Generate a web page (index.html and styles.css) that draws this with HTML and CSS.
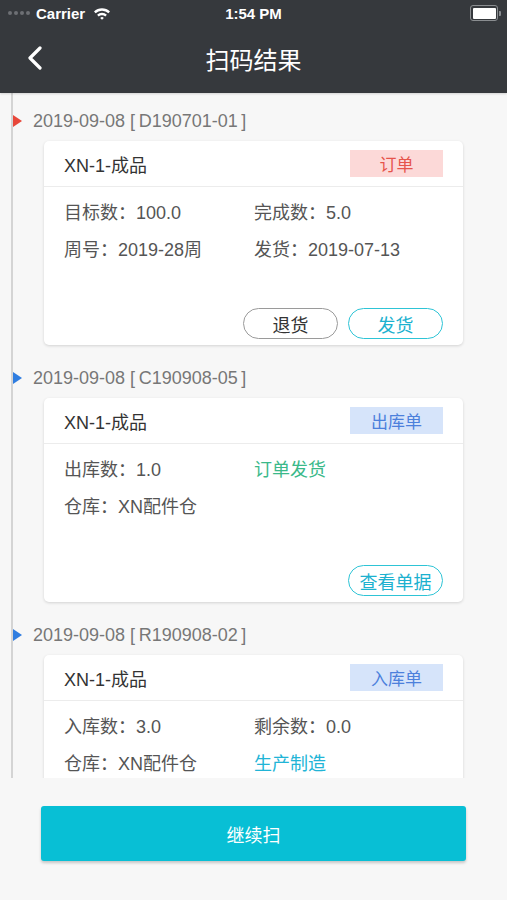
FILE: index.html
```html
<!DOCTYPE html>
<html lang="zh-CN">
<head>
    <meta charset="UTF-8">
    <meta name="viewport" content="width=device-width, initial-scale=1.0">
    <title>扫码结果</title>
    <link rel="stylesheet" href="styles.css">
</head>
<body>
    <div class="header">
        <div class="status-bar">
            <div class="status-left">
                <span class="signal"><i></i><i></i><i></i><i></i></span>
                <span>Carrier</span>
                <svg class="wifi" width="18" height="13" viewBox="0 0 18 13">
                    <path d="M1 4.6a11.5 11.5 0 0 1 16 0l-1.6 1.7a9.2 9.2 0 0 0-12.8 0z" fill="#fff"/>
                    <path d="M4.1 7.8a7 7 0 0 1 9.8 0l-1.6 1.7a4.7 4.7 0 0 0-6.6 0z" fill="#fff"/>
                    <path d="M7.2 11a2.5 2.5 0 0 1 3.6 0L9 12.8z" fill="#fff"/>
                </svg>
            </div>
            <div class="status-time">1:54 PM</div>
            <div class="status-right">
                <span class="battery"><span class="battery-level"></span></span>
                <span class="battery-tip"></span>
            </div>
        </div>
        <div class="nav-bar">
            <svg class="back" width="16" height="24" viewBox="0 0 16 24">
                <path d="M13 2L3 12l10 10" fill="none" stroke="#fff" stroke-width="3.2" stroke-linecap="round" stroke-linejoin="round"/>
            </svg>
            <h1>扫码结果</h1>
        </div>
    </div>

    <div class="timeline">
        <div class="entry">
            <div class="date"><span class="mark red"></span>2019-09-08 [&thinsp;D190701-01&thinsp;]</div>
            <div class="card">
                <div class="card-head">
                    <span class="card-title">XN-1-成品</span>
                    <span class="badge order">订单</span>
                </div>
                <div class="card-body">
                    <div class="row"><span>目标数：100.0</span><span>完成数：5.0</span></div>
                    <div class="row"><span>周号：2019-28周</span><span>发货：2019-07-13</span></div>
                </div>
                <div class="actions">
                    <button class="pill gray">退货</button>
                    <button class="pill cyan">发货</button>
                </div>
            </div>
        </div>

        <div class="entry">
            <div class="date"><span class="mark blue"></span>2019-09-08 [&thinsp;C190908-05&thinsp;]</div>
            <div class="card">
                <div class="card-head">
                    <span class="card-title">XN-1-成品</span>
                    <span class="badge stock">出库单</span>
                </div>
                <div class="card-body">
                    <div class="row"><span>出库数：1.0</span><span class="green">订单发货</span></div>
                    <div class="row"><span>仓库：XN配件仓</span></div>
                </div>
                <div class="actions">
                    <button class="pill cyan">查看单据</button>
                </div>
            </div>
        </div>

        <div class="entry">
            <div class="date"><span class="mark blue"></span>2019-09-08 [&thinsp;R190908-02&thinsp;]</div>
            <div class="card">
                <div class="card-head">
                    <span class="card-title">XN-1-成品</span>
                    <span class="badge stock">入库单</span>
                </div>
                <div class="card-body">
                    <div class="row"><span>入库数：3.0</span><span>剩余数：0.0</span></div>
                    <div class="row"><span>仓库：XN配件仓</span><span class="cyan-text">生产制造</span></div>
                </div>
            </div>
        </div>
    </div>

    <div class="footer">
        <div class="scan-button">继续扫</div>
    </div>
</body>
</html>
```

FILE: styles.css
```css
body {
    margin: 0;
    width: 507px;
    height: 900px;
    overflow: hidden;
    background: #f7f7f7;
    font-family: "Liberation Sans", "Noto Sans CJK SC", sans-serif;
    color: #555;
}
.header {
    height: 93px;
    background: #36393d;
    color: #fff;
    box-shadow: 0 1px 2px rgba(0,0,0,0.15);
    position: relative;
    z-index: 1;
}
.status-bar {
    height: 26px;
    display: flex;
    align-items: center;
    justify-content: space-between;
    padding: 0 6px 0 8px;
    font-size: 15px;
    font-weight: bold;
    position: relative;
}
.status-left {
    display: flex;
    align-items: center;
    gap: 5px;
}
.signal {
    display: flex;
    gap: 2px;
    margin-right: 1px;
}
.signal i {
    width: 4px;
    height: 4px;
    border-radius: 50%;
    background: #6d7074;
}
.wifi {
    margin-left: 3px;
}
.status-time {
    position: absolute;
    left: 0;
    right: 0;
    text-align: center;
    pointer-events: none;
}
.status-right {
    display: flex;
    align-items: center;
}
.battery {
    width: 23px;
    height: 11px;
    border: 1.5px solid #8a8d90;
    border-radius: 3px;
    padding: 1.5px;
    box-sizing: content-box;
    display: flex;
}
.battery-level {
    flex: 1;
    background: #fff;
    border-radius: 1px;
}
.battery-tip {
    width: 2px;
    height: 5px;
    background: #8a8d90;
    border-radius: 0 1px 1px 0;
    margin-left: 1px;
}
.nav-bar {
    height: 67px;
    display: flex;
    align-items: center;
    justify-content: center;
    position: relative;
}
.back {
    position: absolute;
    left: 27px;
    top: 20px;
}
.nav-bar h1 {
    margin: 0 0 2px;
    font-size: 24px;
    font-weight: normal;
}
.timeline {
    margin-left: 11px;
    border-left: 2px solid #d4d4d4;
    height: 685px;
    overflow: hidden;
    padding-top: 18px;
    box-sizing: border-box;
}
.entry {
    margin-bottom: 23px;
}
.date {
    display: flex;
    align-items: center;
    height: 20px;
    font-size: 18px;
    color: #777;
}
.mark {
    width: 0;
    height: 0;
    border-top: 6px solid transparent;
    border-bottom: 6px solid transparent;
    border-left: 9px solid #e8473a;
    margin-right: 11px;
}
.mark.blue {
    border-left-color: #2f7de0;
}
.card {
    margin: 10px 0 0 31px;
    width: 419px;
    height: 204px;
    background: #fff;
    border-radius: 5px;
    box-shadow: 0 1px 3px rgba(0,0,0,0.15);
    display: flex;
    flex-direction: column;
}
.card-head {
    height: 45px;
    border-bottom: 1px solid #ececec;
    display: flex;
    align-items: center;
    justify-content: space-between;
    padding: 0 20px;
}
.card-title {
    font-size: 18px;
    color: #333;
}
.badge {
    width: 93px;
    height: 27px;
    display: flex;
    align-items: center;
    justify-content: center;
    font-size: 17px;
}
.badge.order {
    background: #fcd9d8;
    color: #e6544b;
}
.badge.stock {
    background: #d6e4fa;
    color: #4c80dc;
}
.card-body {
    padding: 5px 20px 0;
}
.row {
    display: grid;
    grid-template-columns: 190px 1fr;
    height: 37px;
    align-items: center;
    font-size: 18px;
    color: #555;
}
.green {
    color: #3bb98a;
}
.cyan-text {
    color: #21b4d6;
}
.actions {
    margin-top: auto;
    padding: 0 20px 6px;
    display: flex;
    justify-content: flex-end;
    gap: 10px;
}
.pill {
    width: 95px;
    height: 31px;
    border-radius: 16px;
    background: #fff;
    font-family: inherit;
    font-size: 18px;
    padding: 0;
}
.pill.gray {
    border: 1.5px solid #9a9a9a;
    color: #333;
}
.pill.cyan {
    border: 1.5px solid #2ec4d6;
    color: #1cb1cf;
}
.footer {
    padding: 28px 41px 0;
}
.scan-button {
    height: 55px;
    border-radius: 3px;
    background: #08bfd5;
    color: #fff;
    font-size: 18px;
    display: flex;
    align-items: center;
    justify-content: center;
    box-shadow: 0 2px 3px rgba(0,0,0,0.2);
}
```
